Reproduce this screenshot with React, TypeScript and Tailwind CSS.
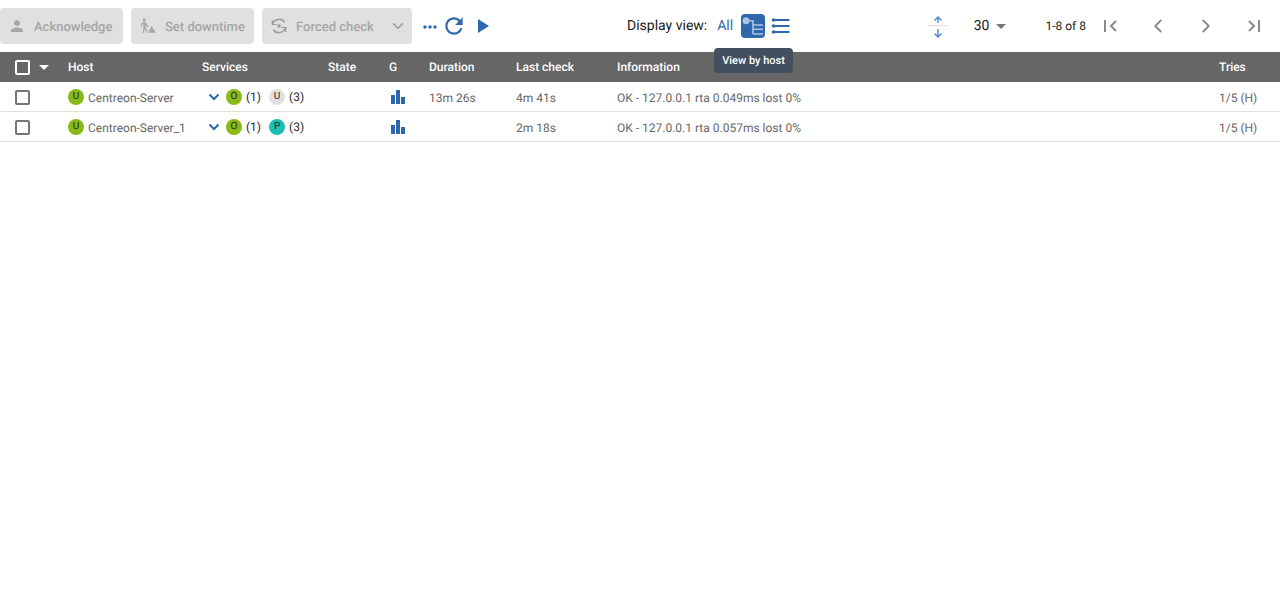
import { ChevronDown, ChevronLeft, ChevronRight } from "lucide-react";

const columns = "grid grid-cols-[68px_134px_126px_61px_40px_87px_101px_602px_1fr]";

type Row = {
  host: string;
  second: string;
  secondClass: string;
  duration: string;
  lastCheck: string;
  info: string;
};

const rows: Row[] = [
  {
    host: "Centreon-Server",
    second: "U",
    secondClass: "bg-[#e0e0e0]",
    duration: "13m 26s",
    lastCheck: "4m 41s",
    info: "OK - 127.0.0.1 rta 0.049ms lost 0%",
  },
  {
    host: "Centreon-Server_1",
    second: "P",
    secondClass: "bg-[#1ebeb3]",
    duration: "",
    lastCheck: "2m 18s",
    info: "OK - 127.0.0.1 rta 0.057ms lost 0%",
  },
];

function ActionButton({ icon, label }: { icon: React.ReactNode; label: string }) {
  return (
    <div className="flex h-9 w-[123px] items-center rounded bg-[#e0e0e0] pl-2 text-[13px] font-medium text-[#a6a6a6]">
      <span className="flex w-[26px] shrink-0 items-center">{icon}</span>
      <span className="pt-[3px]">{label}</span>
    </div>
  );
}

function Badge({ letter, className }: { letter: string; className: string }) {
  return (
    <span className={`flex size-4 shrink-0 items-center justify-center rounded-full text-[10px] leading-none text-[#1f1f1f] ${className}`}>
      {letter}
    </span>
  );
}

function Checkbox({ dark }: { dark?: boolean }) {
  return (
    <span className={`block size-[15px] rounded-[2px] border-2 ${dark ? "border-white" : "border-[#757575]"}`} />
  );
}

export default function App() {
  return (
    <div className="h-[590px] bg-white font-['Roboto',sans-serif] [text-rendering:geometricPrecision]">
      {/* Toolbar */}
      <div className="relative flex h-[52px] items-center">
        <div className="flex items-center gap-2">
          <ActionButton
            label="Acknowledge"
            icon={
              <svg viewBox="0 0 24 24" className="size-[18px] fill-[#a6a6a6]">
                <path d="M12 12c2.21 0 4-1.79 4-4s-1.79-4-4-4-4 1.79-4 4 1.79 4 4 4zm0 2c-2.67 0-8 1.34-8 4v2h16v-2c0-2.66-5.33-4-8-4z" />
              </svg>
            }
          />
          <ActionButton
            label="Set downtime"
            icon={
              <svg viewBox="0 0 24 24" className="size-[18px] fill-[#a6a6a6]">
                <circle cx="7" cy="4" r="2" />
                <path d="M5 7h4l2 4 2 1v1.5l-3-1-1-1.5v4l2 2v4H9.5v-3.2L8 15.5 6.5 21H5l1-7V9l-1.5 1v3H3V9z" />
                <path d="M17 12l5 9H12z" />
              </svg>
            }
          />
          <div className="flex h-9 w-[150px] items-center rounded bg-[#e0e0e0] pl-[8px] text-[13px] font-medium text-[#a6a6a6]">
            <span className="flex w-[26px] shrink-0 items-center">
              <svg viewBox="0 0 24 24" className="size-[18px] fill-none stroke-[#9a9a9a] stroke-2">
                <path d="M3.5 9.5A9 9 0 0 1 19.5 7M20.5 14.5A9 9 0 0 1 4.5 17" />
                <path d="M3 4v6h6M21 20v-6h-6" strokeWidth="1.6" />
                <circle cx="12" cy="12" r="2.2" fill="#9a9a9a" stroke="none" />
              </svg>
            </span>
            <span className="pt-[3px]">Forced check</span>
            <ChevronDown className="ml-auto mr-[5px] size-[18px] text-[#9a9a9a]" />
          </div>
        </div>
        <svg viewBox="0 0 24 24" className="ml-2 mt-px size-5 fill-[#2e68aa]">
          <path d="M6 10c-1.1 0-2 .9-2 2s.9 2 2 2 2-.9 2-2-.9-2-2-2zm12 0c-1.1 0-2 .9-2 2s.9 2 2 2 2-.9 2-2-.9-2-2-2zm-6 0c-1.1 0-2 .9-2 2s.9 2 2 2 2-.9 2-2-.9-2-2-2z" />
        </svg>
        <svg viewBox="0 0 24 24" className="ml-[0.5px] size-[26px] fill-[#2e68aa]">
          <path d="M17.65 6.35C16.2 4.9 14.21 4 12 4c-4.42 0-7.99 3.58-7.99 8s3.57 8 7.99 8c3.73 0 6.84-2.55 7.73-6h-2.08c-.82 2.33-3.04 4-5.65 4-3.31 0-6-2.69-6-6s2.69-6 6-6c1.66 0 3.14.69 4.22 1.78L13 11h7V4l-2.35 2.35z" />
        </svg>
        <svg viewBox="0 0 24 24" className="ml-[3.5px] size-6 fill-[#2e68aa]">
          <path d="M8 5v14l11-7z" />
        </svg>

        {/* Display view */}
        <div className="absolute left-[627px] top-0 flex h-[52px] items-center text-[14px] text-[#1a1a1a]">
          <span className="pt-px">Display view:</span>
          <span className="ml-[10px] pt-px text-[#2e68aa]">All</span>
          <span className="ml-[8px] flex size-6 items-center justify-center rounded bg-[#2e68aa]">
            <svg viewBox="0 0 24 24" className="size-6">
              <circle cx="5" cy="6.7" r="3.5" fill="#a9c4e4" />
              <path d="M5 6.7h7V20M12 11h10M12 15.3h10M12 20h10" fill="none" stroke="#a9c4e4" strokeWidth="1.6" />
            </svg>
          </span>
          <svg viewBox="0 0 20 20" className="ml-[5.5px] size-5 fill-[#2e68aa]">
            <circle cx="2.5" cy="4" r="1.8" />
            <circle cx="2.5" cy="10" r="1.8" />
            <circle cx="2.5" cy="16" r="1.8" />
            <rect x="2" y="3" width="16.5" height="2" />
            <rect x="2" y="9" width="16.5" height="2" />
            <rect x="2" y="15" width="16.5" height="2" />
          </svg>
        </div>

        {/* Pagination */}
        <div className="ml-auto flex items-center text-[#1a1a1a]">
          <svg viewBox="0 0 20 26" className="mr-[26px] h-[26px] w-5 fill-none stroke-[#4f86c6]">
            <path d="M10 10V4M6.5 7.5L10 4l3.5 3.5M10 16v8M6.5 20.5L10 24l3.5-3.5" strokeWidth="1.4" />
            <path d="M0 12.7h20" stroke="#d9d9d9" />
          </svg>
          <span className="text-[14px]">30</span>
          <span className="ml-[7px] h-0 w-0 border-x-[5px] border-t-[5px] border-x-transparent border-t-[#757575]" />
          <span className="ml-[39px] text-[12px]">1-8 of 8</span>
          <span className="ml-[16px] flex w-[18px] items-center text-[#8a8a8a]">
            <svg viewBox="0 0 18 18" className="size-[18px] fill-none stroke-current stroke-2">
              <path d="M3 3v12M14 4L9 9l5 5" />
            </svg>
          </span>
          <ChevronLeft className="ml-[26.5px] size-[22px] text-[#8a8a8a]" />
          <ChevronRight className="ml-[26px] size-[22px] text-[#8a8a8a]" />
          <span className="ml-[28.5px] mr-[17px] flex w-[18px] items-center text-[#8a8a8a]">
            <svg viewBox="0 0 18 18" className="size-[18px] fill-none stroke-current stroke-2">
              <path d="M14 3v12M4 4l5 5-5 5" />
            </svg>
          </span>
        </div>

        <div className="absolute left-[714px] top-[48px] z-10 flex h-[25px] w-[79px] items-center justify-center rounded bg-[#424f5e] pt-[2px] text-[11px] font-medium text-white">
          View by host
        </div>
      </div>

      {/* Table header */}
      <div className={`${columns} h-[30px] items-center bg-[#666666] text-[12px] font-medium text-white`}>
        <div className="flex items-center pl-[14.5px]">
          <Checkbox dark />
          <span className="ml-[9.5px] h-0 w-0 border-x-[5px] border-t-[5px] border-x-transparent border-t-white" />
        </div>
        <div>Host</div>
        <div>Services</div>
        <div>State</div>
        <div>G</div>
        <div>Duration</div>
        <div>Last check</div>
        <div>Information</div>
        <div>Tries</div>
      </div>

      {/* Table rows */}
      {rows.map((row) => (
        <div key={row.host} className={`${columns} h-[30px] items-center border-b border-[#e0e0e0] pt-px text-[12px] text-[#666666]`}>
          <div className="pl-[14.5px]">
            <Checkbox />
          </div>
          <div className="flex items-center gap-1">
            <Badge letter="U" className="bg-[#88b917]" />
            <span className="pt-[2px]">{row.host}</span>
          </div>
          <div className="flex items-center text-[#2b2b2b]">
            <svg viewBox="0 0 12 8" className="ml-[6px] h-2 w-3 fill-none stroke-[#2e68aa] stroke-2">
              <path d="M1.5 1.5L6 6l4.5-4.5" />
            </svg>
            <span className="ml-[6px]"><Badge letter="O" className="bg-[#88b917]" /></span>
            <span className="ml-1">(1)</span>
            <span className="ml-2"><Badge letter={row.second} className={row.secondClass} /></span>
            <span className="ml-1">(3)</span>
          </div>
          <div />
          <div>
            <svg viewBox="0 0 14 14" className="ml-[2px] size-[14px] fill-[#2e68aa]">
              <rect x="0" y="5" width="4" height="9" />
              <rect x="5" y="0" width="4" height="14" />
              <rect x="10" y="7" width="4" height="7" />
            </svg>
          </div>
          <div className="pt-[2px]">{row.duration}</div>
          <div className="pt-[2px]">{row.lastCheck}</div>
          <div className="pt-[2px]">{row.info}</div>
          <div className="pt-[2px]">1/5 (H)</div>
        </div>
      ))}
    </div>
  );
}
